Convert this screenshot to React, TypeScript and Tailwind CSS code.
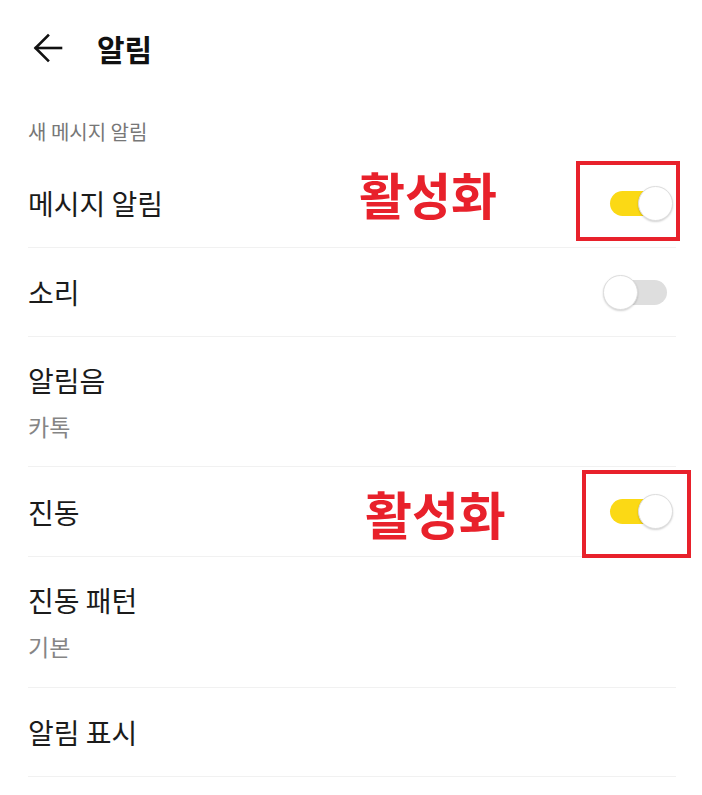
import React from "react";

const font = { fontFamily: '"Noto Sans CJK KR", "Noto Sans", sans-serif' };

type ToggleProps = { on: boolean };

const Toggle = ({ on }: ToggleProps) => (
  <div className="relative w-[70px] h-[35px] mr-[3px] shrink-0">
    <div
      className={`absolute left-[7px] top-[5px] w-[57px] h-[25px] rounded-full ${
        on ? "bg-[#fbd915]" : "bg-[#dedede]"
      }`}
    />
    <div
      className={`absolute top-0 w-[35px] h-[35px] rounded-full bg-white border border-[#dddddd] shadow-[0_1px_2px_rgba(0,0,0,0.18)] ${
        on ? "right-0" : "left-0"
      }`}
    />
  </div>
);

type RowProps = { title: string; sub?: string; toggle?: boolean; big?: boolean };

const Row = ({ title, sub, toggle, big }: RowProps) =>
  sub ? (
    <div className={`${big ? "h-[131px]" : "h-[130px]"} border-b border-[#f1f1f1] pt-[25px]`}>
      <div className="text-[28px] leading-[36px] text-[#1b1b1b]">{title}</div>
      <div className="mt-[13px] text-[23px] leading-[30px] text-[#858585]">{sub}</div>
    </div>
  ) : (
    <div
      className={`${big ? "h-[90px]" : "h-[89px]"} border-b border-[#f1f1f1] flex items-center justify-between`}
    >
      <div className="text-[28px] leading-[36px] text-[#1b1b1b]">{title}</div>
      {toggle !== undefined && <Toggle on={toggle} />}
    </div>
  );

export default function App() {
  return (
    <div className="relative w-[702px] h-[795px] bg-white overflow-hidden" style={font}>
      <div className="h-[96px] flex items-center pl-[33px]">
        <svg width="30" height="30" viewBox="0 0 30 30" fill="none" stroke="#111" strokeWidth="2.6" strokeLinecap="square">
          <path d="M28 15H3" />
          <path d="M15 2.5L2.5 15L15 27.5" />
        </svg>
        <div className="ml-[34px] text-[30px] font-bold leading-none text-[#111]">알림</div>
      </div>

      <div className="pl-[28px] pr-[26px]">
        <div className="pt-[21px] pb-[13px] text-[20px] leading-[29px] text-[#777777]">새 메시지 알림</div>
        <Row title="메시지 알림" toggle={true} />
        <Row title="소리" toggle={false} />
        <Row title="알림음" sub="카톡" />
        <Row title="진동" toggle={true} big />
        <Row title="진동 패턴" sub="기본" big />
        <Row title="알림 표시" />
      </div>

      {/* annotations */}
      <div className="absolute left-[359px] top-[168px] text-[50px] leading-[50px] font-bold text-[#e8212b]">활성화</div>
      <div className="absolute left-[576px] top-[161px] w-[104px] h-[80px] border-4 border-[#e8212b]" />
      <div className="absolute left-[365px] top-[488px] text-[51px] leading-[51px] font-bold text-[#e8212b]">활성화</div>
      <div className="absolute left-[582px] top-[470px] w-[109px] h-[88px] border-4 border-[#e8212b]" />
    </div>
  );
}
